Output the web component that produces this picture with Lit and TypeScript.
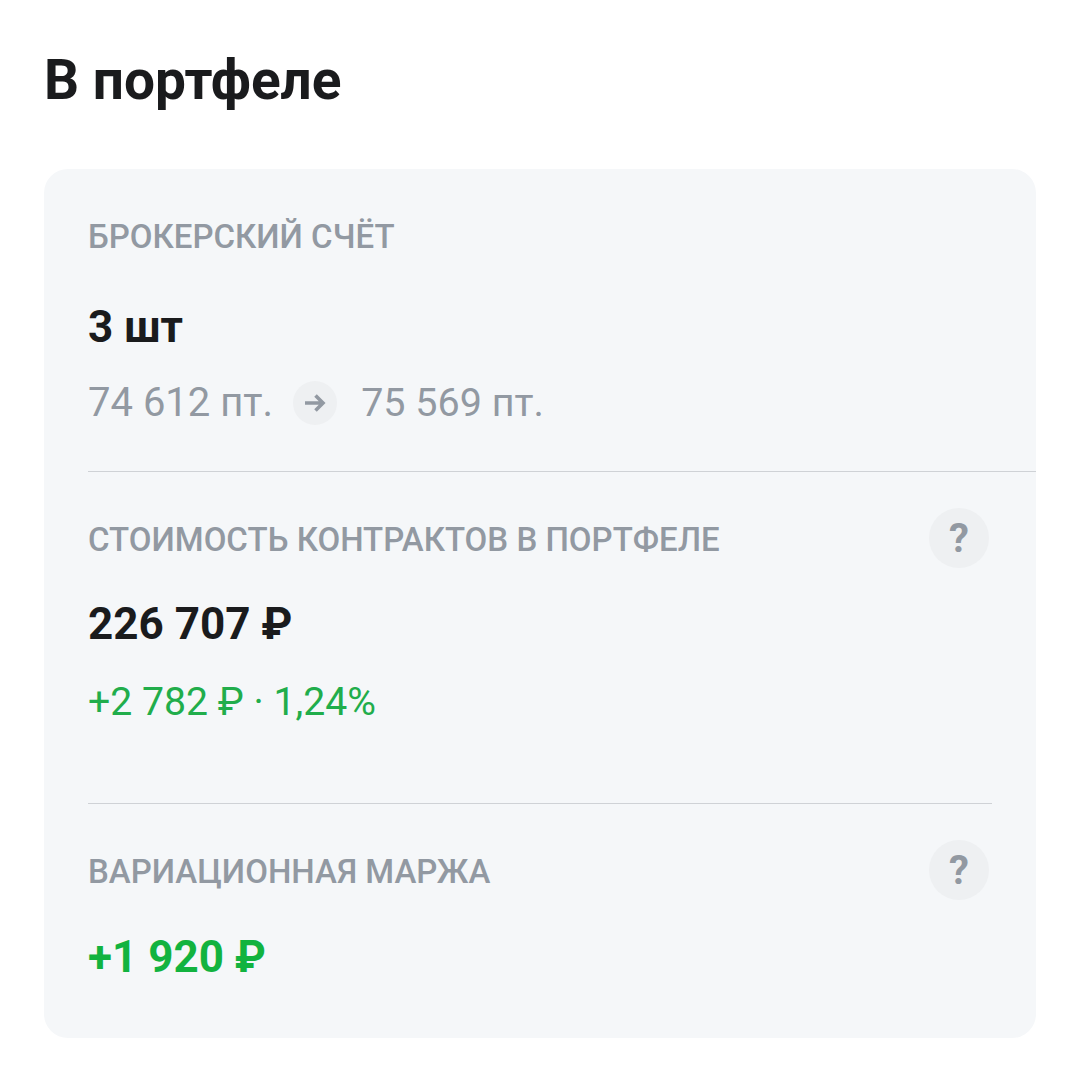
import { LitElement, html, css } from "lit";
import { customElement } from "lit/decorators.js";

@customElement("app-root")
export class AppRoot extends LitElement {
  static styles = css`
    :host {
      display: block;
      width: 1080px;
      height: 1081px;
      background: #fff;
      font-family: Roboto, "Liberation Sans", sans-serif;
      overflow: hidden;
    }
    h1 {
      margin: 0;
      padding: 48px 44px 0;
      height: 169px;
      box-sizing: border-box;
      font-size: 55px;
      line-height: 64px;
      font-weight: 700;
      color: #1a1b1d;
    }
    .card {
      margin: 0 44px;
      height: 869px;
      box-sizing: border-box;
      padding-left: 44px;
      background: #f5f7f9;
      border-radius: 24px;
    }
    .section {
      box-sizing: border-box;
      padding-right: 44px;
    }
    .first {
      height: 303px;
      padding-top: 47px;
      border-bottom: 1px solid #cfd2d6;
    }
    .second {
      height: 332px;
      padding-top: 36px;
      margin-right: 44px;
      padding-right: 3px;
      border-bottom: 1px solid #cfd2d6;
    }
    .third {
      padding-top: 36px;
      padding-right: 47px;
    }
    .head {
      display: flex;
      align-items: center;
      justify-content: space-between;
      height: 60px;
    }
    .first .head {
      height: 42px;
    }
    .label {
      margin-top: 4px;
      font-size: 33px;
      line-height: 42px;
      font-weight: 500;
      color: #9299a2;
    }
    .first .label {
      margin-top: 0;
    }
    .value {
      font-size: 44px;
      line-height: 52px;
      font-weight: 700;
      color: #1a1b1d;
    }
    .first .value {
      margin-top: 43px;
    }
    .second .value {
      margin-top: 30px;
    }
    .third .value {
      margin-top: 31px;
    }
    .green {
      color: #12b33f;
    }
    .sub {
      font-size: 40px;
      line-height: 44px;
      color: #9299a2;
    }
    .route {
      display: flex;
      align-items: center;
      margin-top: 28px;
    }
    .to {
      font-size: 39.5px;
    }
    .arrow {
      display: flex;
      align-items: center;
      justify-content: center;
      width: 44px;
      height: 44px;
      margin: 0 24px 0 20px;
      border-radius: 50%;
      background: #eef0f2;
    }
    .change {
      margin-top: 30px;
      font-size: 39.2px;
      color: #21ad4b;
    }
    .help {
      display: flex;
      align-items: center;
      justify-content: center;
      width: 60px;
      height: 60px;
      border-radius: 50%;
      background: #eef0f2;
      font-size: 40px;
      font-weight: 700;
      color: #9299a2;
    }
  `;

  render() {
    return html`
      <h1>В портфеле</h1>
      <div class="card">
        <div class="section first">
          <div class="head"><span class="label">БРОКЕРСКИЙ СЧЁТ</span></div>
          <div class="value">3 шт</div>
          <div class="sub route">
            <span>74 612 пт.</span>
            <span class="arrow">
              <svg width="22" height="20" viewBox="0 0 22 20" fill="none" stroke="#9299a2" stroke-width="3.6">
                <path d="M1 10h18M11.5 2.5 19 10l-7.5 7.5" />
              </svg>
            </span>
            <span class="to">75 569 пт.</span>
          </div>
        </div>
        <div class="section second">
          <div class="head">
            <span class="label">СТОИМОСТЬ КОНТРАКТОВ В ПОРТФЕЛЕ</span>
            <span class="help">?</span>
          </div>
          <div class="value">226 707 ₽</div>
          <div class="sub change">+2 782 ₽ · 1,24%</div>
        </div>
        <div class="section third">
          <div class="head">
            <span class="label">ВАРИАЦИОННАЯ МАРЖА</span>
            <span class="help">?</span>
          </div>
          <div class="value green">+1 920 ₽</div>
        </div>
      </div>
    `;
  }
}
